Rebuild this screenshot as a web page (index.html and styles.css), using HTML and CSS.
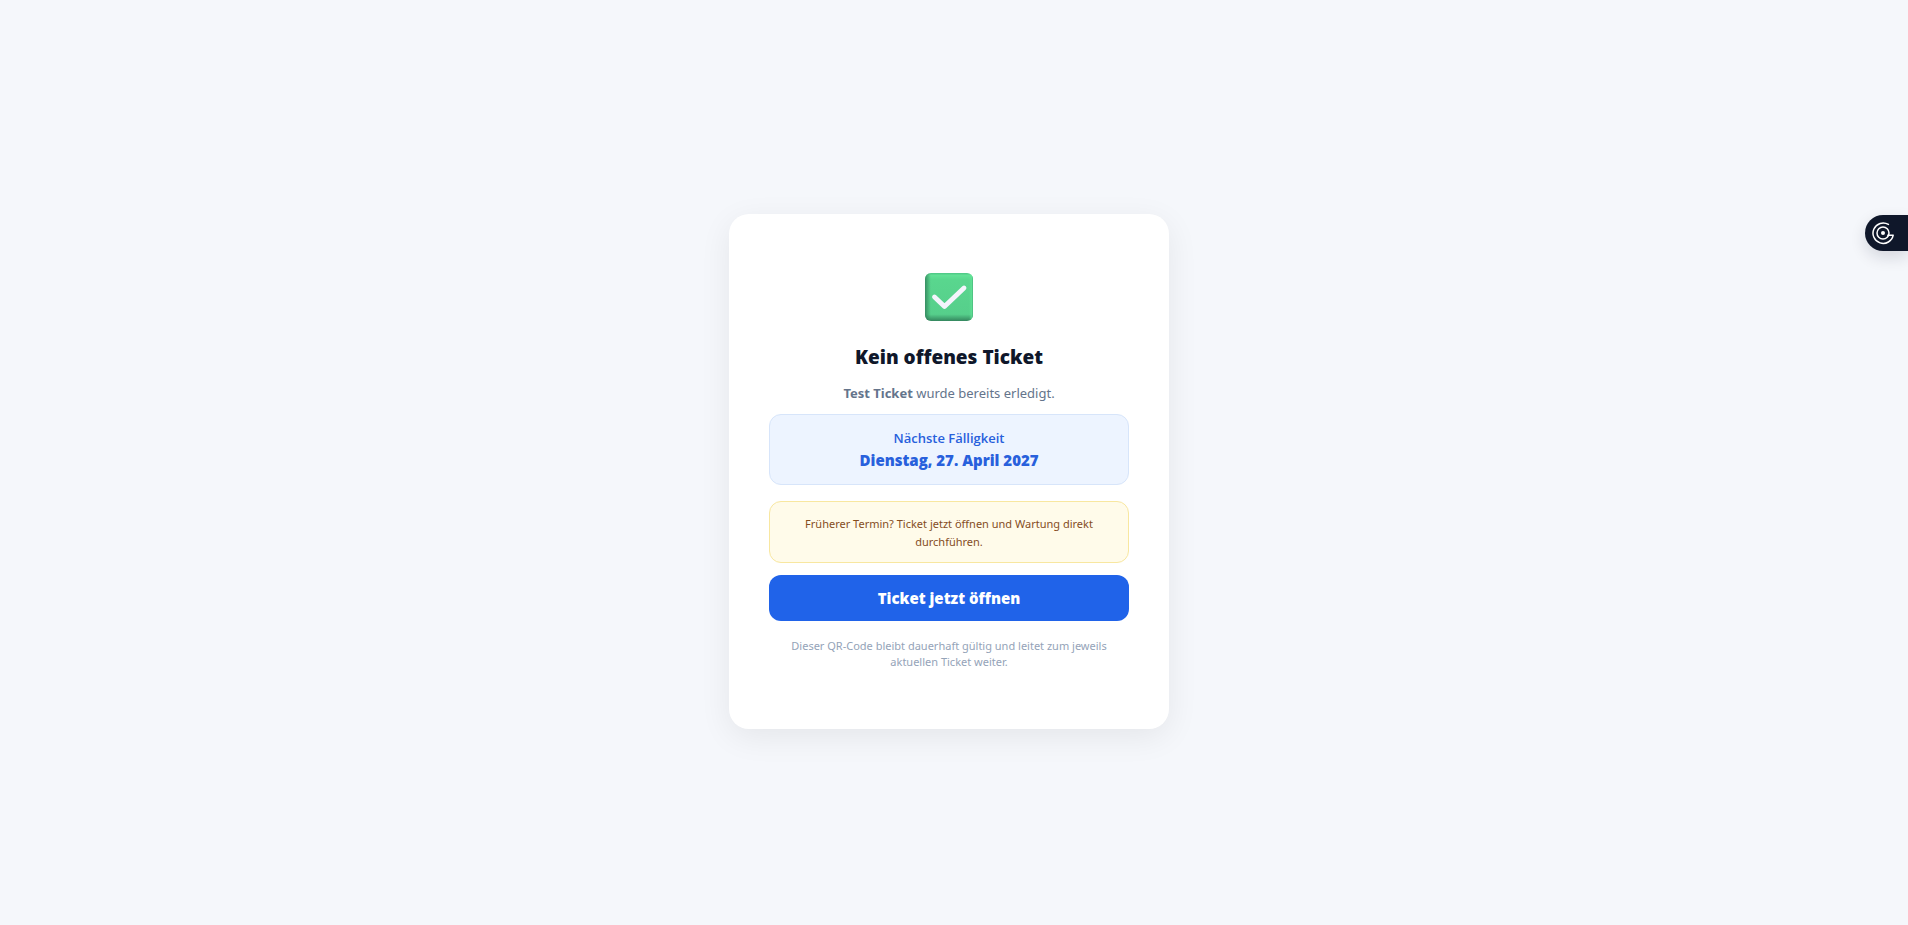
FILE: index.html
```html
<!DOCTYPE html>
<html lang="de">
<head>
  <meta charset="UTF-8" />
  <meta name="viewport" content="width=device-width, initial-scale=1" />
  <title>Kein offenes Ticket</title>
  <link rel="stylesheet" href="styles.css">
</head>
<body>

<main class="page">
  <section class="card">
    <svg class="check-icon" viewBox="0 0 48 48" aria-hidden="true">
      <defs>
        <linearGradient id="side" x1="0" y1="0" x2="1" y2="0">
          <stop offset="0" stop-color="#2f7d58" stop-opacity="0.8" />
          <stop offset="0.12" stop-color="#2f7d58" stop-opacity="0" />
          <stop offset="0.92" stop-color="#62e798" stop-opacity="0" />
          <stop offset="0.97" stop-color="#62e798" stop-opacity="0.6" />
          <stop offset="1" stop-color="#45ad77" />
        </linearGradient>
        <linearGradient id="base" x1="0" y1="0" x2="0" y2="1">
          <stop offset="0" stop-color="#4dc584" />
          <stop offset="0.05" stop-color="#62e196" />
          <stop offset="0.15" stop-color="#59d68e" />
          <stop offset="0.86" stop-color="#56cf8b" />
          <stop offset="1" stop-color="#34865e" />
        </linearGradient>
      </defs>
      <rect width="48" height="48" rx="6" fill="url(#base)" />
      <rect width="48" height="48" rx="6" fill="url(#side)" />
      <path d="M9.5 24 L19.5 33.5 L39 15" fill="none" stroke="#f4f4fc" stroke-width="4.8" stroke-linecap="round" stroke-linejoin="round" />
    </svg>
    <h1 class="title">Kein offenes Ticket</h1>
    <p class="subtitle"><strong>Test Ticket</strong> wurde bereits erledigt.</p>

    <div class="box due">
      <div class="due-label">Nächste Fälligkeit</div>
      <div class="due-date">Dienstag, 27. April 2027</div>
    </div>

    <div class="box hint">Früherer Termin? Ticket jetzt öffnen und Wartung direkt durchführen.</div>

    <button class="open-btn" type="button">Ticket jetzt öffnen</button>

    <p class="note">Dieser QR-Code bleibt dauerhaft gültig und leitet zum jeweils aktuellen Ticket weiter.</p>
  </section>
</main>

<button class="side-tab" type="button" aria-label="Widget öffnen">
  <svg class="side-icon" viewBox="0 0 24 24" aria-hidden="true">
    <path d="M17.4 3.4 A10.2 10.2 0 1 0 22.2 14.2 H16.8" />
    <circle cx="12" cy="12" r="6" />
    <circle class="dot" cx="12" cy="12" r="2" />
  </svg>
</button>

</body>
</html>
```

FILE: styles.css
```css
* {
  box-sizing: border-box;
}

body {
  margin: 0;
  background: #f5f7fb;
  color: #0f172a;
  font-family: "Segoe UI", "Noto Sans", sans-serif;
}

.page {
  min-height: 100vh;
  display: flex;
  align-items: center;
  justify-content: center;
  padding: 34px 26px 16px 16px;
}

.card {
  width: 100%;
  max-width: 440px;
  padding: 59px 40px;
  display: flex;
  flex-direction: column;
  align-items: stretch;
  text-align: center;
  background: #fff;
  border-radius: 20px;
  box-shadow: 0 8px 32px rgba(0, 0, 0, 0.07);
}

.check-icon {
  width: 48px;
  height: 48px;
  align-self: center;
  margin-bottom: 22px;
}

.title,
.due-label,
.due-date,
.open-btn {
  font-family: "Segoe UI", "Open Sans", sans-serif;
}

.title {
  margin: 0 0 12px;
  font-size: 19px;
  line-height: 28px;
  font-weight: 900;
}

.subtitle {
  margin: 0 0 11px;
  font-size: 13px;
  line-height: 20px;
  color: #64748b;
}

.box {
  border: 1px solid;
  border-radius: 12px;
}

.due {
  margin-bottom: 16px;
  padding: 13px 16px 14px;
  background: #edf4ff;
  border-color: #d7e5fa;
  color: #2860dc;
}

.due-label {
  font-size: 13px;
  line-height: 20px;
  font-weight: 600;
}

.due-date {
  margin-top: 2px;
  font-size: 15px;
  line-height: 20px;
  font-weight: 800;
}

.hint {
  margin-bottom: 12px;
  padding: 13px 16px 11px;
  background: #fffbea;
  border-color: #f8e7a0;
  color: #854d1e;
  font-size: 11px;
  line-height: 18px;
}

.open-btn {
  width: 100%;
  padding: 13px 16px;
  border: none;
  border-radius: 12px;
  background: #2063e9;
  color: #fff;
  font-size: 15px;
  line-height: 20px;
  font-weight: 800;
  cursor: pointer;
}

.note {
  margin: 17px 0 0;
  padding: 0 8px;
  font-size: 11px;
  line-height: 16px;
  color: #94a3b8;
}

/* tab docked to the right window edge */
.side-tab {
  position: fixed;
  top: 215px;
  right: 0;
  width: 43px;
  height: 36px;
  padding: 0 0 0 6px;
  display: flex;
  align-items: center;
  border: none;
  border-radius: 18px 0 0 18px;
  background: #0f172a;
  box-shadow: 0 6px 16px rgba(15, 23, 42, 0.14);
  cursor: pointer;
}

.side-icon {
  width: 24px;
  height: 24px;
  fill: none;
  stroke: #fff;
  stroke-width: 1.5;
  stroke-linecap: round;
  stroke-linejoin: round;
}

.side-icon .dot {
  fill: #fff;
  stroke: none;
}
```
